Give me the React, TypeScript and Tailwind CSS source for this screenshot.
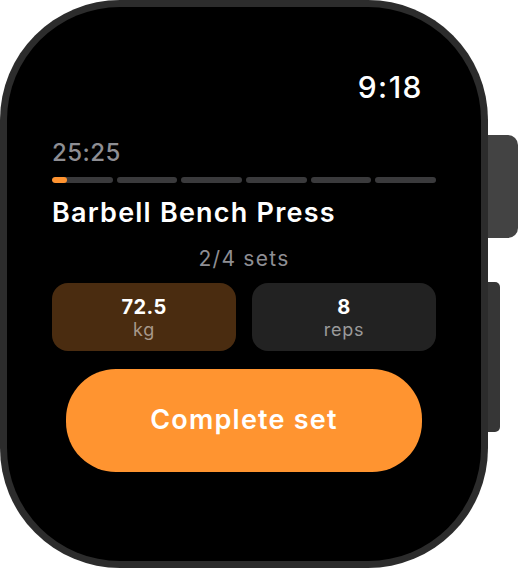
import React from 'react';

const SEGMENTS = 6;

export default function App() {
    return (
        <div className="min-h-screen bg-white flex items-start" style={{ fontFamily: 'Inter, "Noto Sans", sans-serif' }}>
            {/* Case */}
            <div className="w-[488px] h-[568px] rounded-[120px] bg-[#2c2c2c] p-[7px] shrink-0">
                <div className="w-full h-full rounded-[113px] bg-black flex flex-col px-[45px] pt-[62px]">
                    {/* Clock */}
                    <div className="flex justify-end pr-[13px]">
                        <span className="text-[30px] leading-[36px] font-medium tracking-[0.05em] text-white">9:18</span>
                    </div>

                    {/* Elapsed */}
                    <div className="mt-[34px] text-[24px] leading-[28px] font-medium tracking-[0.02em] text-[#8e8e93]">25:25</div>

                    {/* Progress */}
                    <div className="mt-[10px] flex gap-[4px]">
                        {Array.from({ length: SEGMENTS }).map((_, i) => (
                            <div key={i} className="flex-1 h-[6px] rounded-full bg-[#3a3a3c] overflow-hidden">
                                {i === 0 && <div className="w-[15px] h-full rounded-full bg-[#ff9330]"></div>}
                            </div>
                        ))}
                    </div>

                    <h1 className="mt-[14px] text-[27px] leading-[32px] font-semibold tracking-[0.045em] text-white">Barbell Bench Press</h1>

                    <p className="mt-[17px] text-center text-[21px] leading-[26px] tracking-[0.06em] text-[#8e8e93]">2/4 sets</p>

                    {/* Weight / reps */}
                    <div className="mt-[11px] flex gap-[16px]">
                        <div className="flex-1 h-[68px] rounded-[16px] bg-[#4a2c10] flex flex-col items-center pt-[12px]">
                            <span className="text-[20px] leading-[24px] font-bold tracking-[0.02em] text-white">72.5</span>
                            <span className="text-[18px] leading-[22px] tracking-[0.04em] text-[#a8998a]">kg</span>
                        </div>
                        <div className="flex-1 h-[68px] rounded-[16px] bg-[#222222] flex flex-col items-center pt-[12px]">
                            <span className="text-[20px] leading-[24px] font-bold tracking-[0.02em] text-white">8</span>
                            <span className="text-[18px] leading-[22px] tracking-[0.04em] text-[#9a9a9a]">reps</span>
                        </div>
                    </div>

                    <button className="mt-[18px] mx-[14px] h-[103px] rounded-[50px] bg-[#ff9430] text-white text-[27px] font-semibold tracking-[0.045em] flex items-center justify-center">
                        Complete set
                    </button>
                </div>
            </div>

            {/* Side buttons */}
            <div className="flex flex-col">
                <div className="mt-[135px] w-[30px] h-[103px] rounded-r-[10px] bg-[#434343]"></div>
                <div className="mt-[44px] w-[12px] h-[150px] rounded-r-[5px] bg-[#363636]"></div>
            </div>
        </div>
    );
}
